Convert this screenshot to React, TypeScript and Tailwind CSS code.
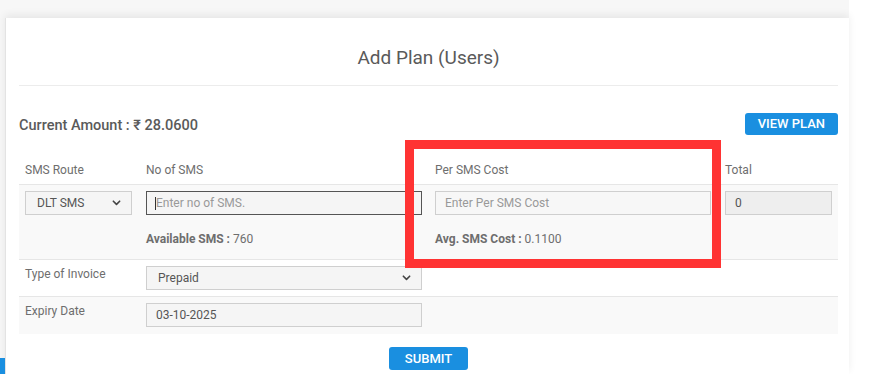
import React from "react";

function Chevron() {
  return (
    <svg className="h-[8px] w-[9px] text-[#444]" viewBox="0 0 10 8" fill="none">
      <path d="M1.5 2l3.5 3.5L8.5 2" stroke="currentColor" strokeWidth={1.8} strokeLinecap="round" strokeLinejoin="round" />
    </svg>
  );
}

function FakeSelect({ value, width }: { value: string; width: string }) {
  return (
    <div
      className={`flex h-[24px] ${width} items-center justify-between border border-[#cfcfcf] bg-[#f5f5f5] pl-[11px] pr-[10px] text-[12px] text-[#555]`}
    >
      <span>{value}</span>
      <Chevron />
    </div>
  );
}

export default function App() {
  return (
    <div className="relative h-[374px] w-[877px] overflow-hidden bg-white font-['Roboto',sans-serif]">
      <div className="h-full w-[849px] bg-[#f7f7f7] pl-[5px] pt-[18px]">
        <div className="h-full border-l border-[#e3e3e3] bg-white pl-[13px] pr-[11px] shadow-[0_-3px_8px_rgba(0,0,0,0.07)]">
          {/* Titre */}
          <div className="pt-[29px] pb-[16px] text-center text-[19px] leading-[22px] text-[#5a5a5a]">
            Add Plan (Users)
          </div>
          <div className="border-t border-[#ececec]" />

          {/* Solde */}
          <div className="mt-[27px] flex h-[22px] items-end justify-between">
            <p className="text-[14.5px] font-medium leading-[18px] text-[#5a5a5a]">
              Current Amount : ₹ 28.0600
            </p>
            <button className="h-[22px] rounded-[3px] bg-[#1a8fe0] px-[13px] text-[13px] font-medium text-white">
              VIEW PLAN
            </button>
          </div>

          {/* Tableau */}
          <div className="mt-[17px] text-[12px] text-[#6e6e6e]">
            <div className="grid h-[33px] grid-cols-[121px_289px_290px_119px] items-center border-b border-[#e6e6e6] pt-[3px]">
              <span className="pl-[6px]">SMS Route</span>
              <span className="pl-[6px]">No of SMS</span>
              <span className="pl-[6px]">Per SMS Cost</span>
              <span className="pl-[6px]">Total</span>
            </div>

            <div className="grid h-[75px] grid-cols-[121px_289px_290px_119px] border-b border-[#e6e6e6] bg-[#f9f9f9] pt-[6px]">
              <div className="pl-[6px]">
                <FakeSelect value="DLT SMS" width="w-[107px]" />
              </div>
              <div className="pl-[6px]">
                <div className="relative">
                  <input
                    readOnly
                    placeholder="Enter no of SMS."
                    className="h-[24px] w-[276px] border border-[#555] bg-[#f5f5f5] pl-[9px] text-[12px] text-[#444] outline-none placeholder:text-[#999]"
                  />
                  <span className="absolute left-[9px] top-[6px] h-[13px] w-px bg-[#333]" />
                </div>
                <p className="mt-[17px] leading-[14px]">
                  <span className="font-bold">Available SMS :</span> 760
                </p>
              </div>
              <div className="pl-[6px]">
                <input
                  readOnly
                  placeholder="Enter Per SMS Cost"
                  className="h-[24px] w-[276px] border border-[#cfcfcf] bg-[#f7f7f7] pl-[9px] text-[12px] outline-none placeholder:text-[#999]"
                />
                <p className="mt-[17px] leading-[14px]">
                  <span className="font-bold">Avg. SMS Cost :</span> 0.1100
                </p>
              </div>
              <div className="pl-[6px]">
                <div className="flex h-[24px] w-[107px] items-center border border-[#cfcfcf] bg-[#eeeeee] pl-[9px] text-[#555]">
                  0
                </div>
              </div>
            </div>

            <div className="grid h-[37px] grid-cols-[121px_289px] border-b border-[#e6e6e6] pt-[6px]">
              <span className="pl-[6px] pt-[1px] leading-[14px]">Type of Invoice</span>
              <div className="pl-[6px]">
                <FakeSelect value="Prepaid" width="w-[276px]" />
              </div>
            </div>

            <div className="grid h-[37px] grid-cols-[121px_289px] bg-[#f9f9f9] pt-[6px]">
              <span className="pl-[6px] pt-[1px] leading-[14px]">Expiry Date</span>
              <div className="pl-[6px]">
                <div className="flex h-[24px] w-[276px] items-center border border-[#cfcfcf] bg-[#f5f5f5] pl-[9px] text-[#555]">
                  03-10-2025
                </div>
              </div>
            </div>
          </div>

          <div className="mt-[13px] flex justify-center">
            <button className="h-[23px] rounded-[3px] bg-[#1a8fe0] px-[16px] text-[13px] font-medium text-white">
              SUBMIT
            </button>
          </div>
        </div>
      </div>

      {/* Cadre d'annotation rouge */}
      <div className="absolute left-[405px] top-[140px] h-[128px] w-[316px] border-[9px] border-[#ff3333]" />
      <div className="absolute left-0 top-[358px] h-[16px] w-[5px] bg-[#1a8fe0]" />
    </div>
  );
}
